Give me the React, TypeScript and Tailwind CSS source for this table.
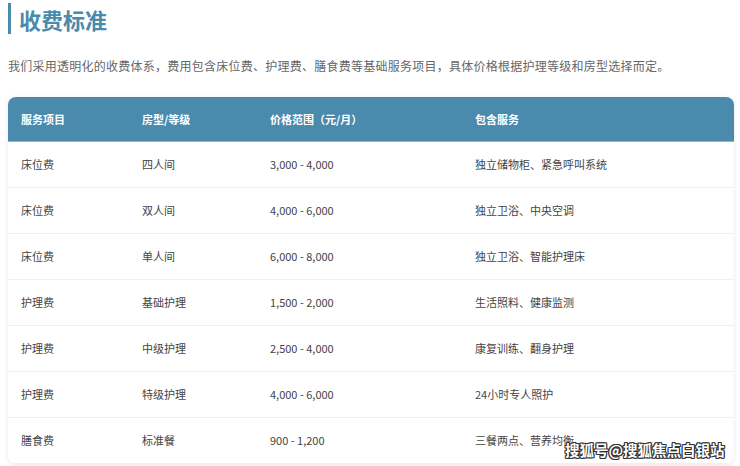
import React from "react";

const rows = [
  ["床位费", "四人间", "3,000 - 4,000", "独立储物柜、紧急呼叫系统"],
  ["床位费", "双人间", "4,000 - 6,000", "独立卫浴、中央空调"],
  ["床位费", "单人间", "6,000 - 8,000", "独立卫浴、智能护理床"],
  ["护理费", "基础护理", "1,500 - 2,000", "生活照料、健康监测"],
  ["护理费", "中级护理", "2,500 - 4,000", "康复训练、翻身护理"],
  ["护理费", "特级护理", "4,000 - 6,000", "24小时专人照护"],
  ["膳食费", "标准餐", "900 - 1,200", "三餐两点、营养均衡"],
];

export default function App() {
  return (
    <div
      className="relative w-[740px] h-[466px] overflow-hidden bg-white"
      style={{ fontFamily: '"Noto Sans CJK SC", "Noto Sans", sans-serif' }}
    >
      <div className="pl-[8px] pr-[6px] pt-[3px]">
        <div className="flex items-center h-[31px] border-l-[3px] border-[#4a8aad] pl-[8px]">
          <h1 className="text-[22px] font-bold text-[#4a8aad] leading-none">收费标准</h1>
        </div>
        <p className="mt-[22px] text-[12px] tracking-[0.25px] text-[#666] leading-[20px]">
          我们采用透明化的收费体系，费用包含床位费、护理费、膳食费等基础服务项目，具体价格根据护理等级和房型选择而定。
        </p>
        <div className="mt-[21px] rounded-[8px] overflow-hidden bg-white shadow-[0_1px_4px_rgba(0,0,0,0.1)]">
          <div className="grid grid-cols-[121px_128px_205px_1fr] h-[45px] items-center bg-[#4a8aad] text-white text-[11px] font-bold border-b border-[#8db6cc]">
            <div className="pl-[13px]">服务项目</div>
            <div className="pl-[13px]">房型/等级</div>
            <div className="pl-[13px]">价格范围（元/月）</div>
            <div className="pl-[13px]">包含服务</div>
          </div>
          {rows.map((r, i) => (
            <div
              key={i}
              className="grid grid-cols-[121px_128px_205px_1fr] h-[46px] items-center text-[11px] text-[#444] border-b border-[#f0f0f0]"
            >
              {r.map((c, j) => (
                <div key={j} className="pl-[13px]">
                  {c}
                </div>
              ))}
            </div>
          ))}
        </div>
      </div>
      <div
        className="absolute left-[565px] top-[440px] whitespace-nowrap text-[14.5px] font-bold text-white leading-[20px]"
        style={{
          textShadow:
            "1px 0 0 #333, -1px 0 0 #333, 0 1px 0 #333, 0 -1px 0 #333, 1px 1px 0 #333, -1px -1px 0 #333, 1px -1px 0 #333, -1px 1px 0 #333",
        }}
      >
        搜狐号@搜狐焦点白银站
      </div>
    </div>
  );
}
